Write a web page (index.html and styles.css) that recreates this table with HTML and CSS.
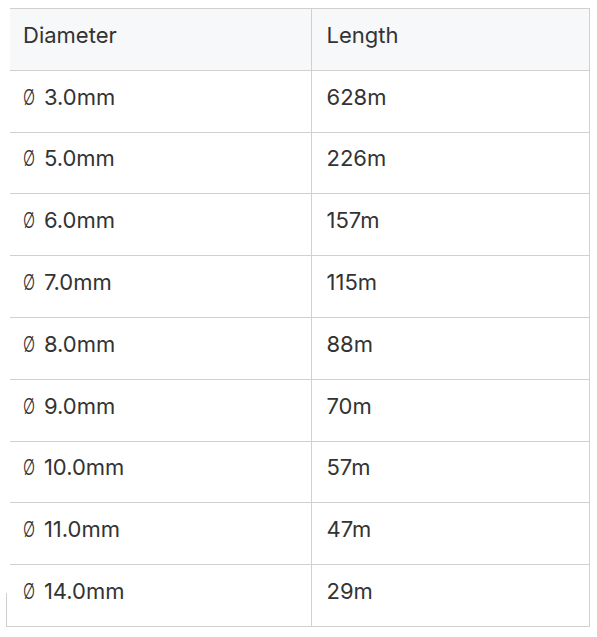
FILE: index.html
```html
<!DOCTYPE html>
<html>
<head>
<meta charset="utf-8">
<link rel="stylesheet" href="styles.css">
</head>
<body>
<div class="wrap">
<table class="spec">
  <thead>
    <tr><th class="c1">Diameter</th><th class="c2">Length</th></tr>
  </thead>
  <tbody>
    <tr><td class="c1"><span class="dia">Ø</span> 3.0mm</td><td class="c2">628m</td></tr>
    <tr><td class="c1"><span class="dia">Ø</span> 5.0mm</td><td class="c2">226m</td></tr>
    <tr><td class="c1"><span class="dia">Ø</span> 6.0mm</td><td class="c2">157m</td></tr>
    <tr><td class="c1"><span class="dia">Ø</span> 7.0mm</td><td class="c2">115m</td></tr>
    <tr><td class="c1"><span class="dia">Ø</span> 8.0mm</td><td class="c2">88m</td></tr>
    <tr><td class="c1"><span class="dia">Ø</span> 9.0mm</td><td class="c2">70m</td></tr>
    <tr><td class="c1"><span class="dia">Ø</span> 10.0mm</td><td class="c2">57m</td></tr>
    <tr><td class="c1"><span class="dia">Ø</span> 11.0mm</td><td class="c2">47m</td></tr>
    <tr><td class="c1"><span class="dia">Ø</span> 14.0mm</td><td class="c2">29m</td></tr>
  </tbody>
</table>
</div>
</body>
</html>
```

FILE: styles.css
```css
html, body {
  margin: 0;
  padding: 0;
  background: #ffffff;
}
.wrap {
  position: relative;
  padding: 8px 0 0 10px;
}
.wrap::before {
  content: "";
  position: absolute;
  left: 6px;
  top: 593px;
  width: 1px;
  height: 34px;
  background: #cfcfcf;
}
.wrap::after {
  content: "";
  position: absolute;
  left: 6px;
  top: 626px;
  width: 4px;
  height: 1px;
  background: #cfcfcf;
}
.spec {
  border-collapse: collapse;
  width: 580px;
  font-family: Inter, "Noto Sans", sans-serif;
  font-size: 22px;
  color: #333333;
  table-layout: fixed;
}
.spec th, .spec td {
  border: 1px solid #d0d0d0;
  height: 61.8px;
  padding: 0 14px 9px 14px;
  text-align: left;
  font-weight: 400;
  box-sizing: border-box;
}
.spec th.c1, .spec td.c1 {
  border-left: none;
  width: 301px;
  padding-left: 13px;
}
.spec th.c2, .spec td.c2 {
  padding-left: 15px;
}
.spec thead th {
  background: #f6f8fa;
}
.dia {
  display: inline-block;
  transform: scaleX(0.72);
  transform-origin: left center;
  margin-right: -2px;
  font-weight: 300;
}
```
